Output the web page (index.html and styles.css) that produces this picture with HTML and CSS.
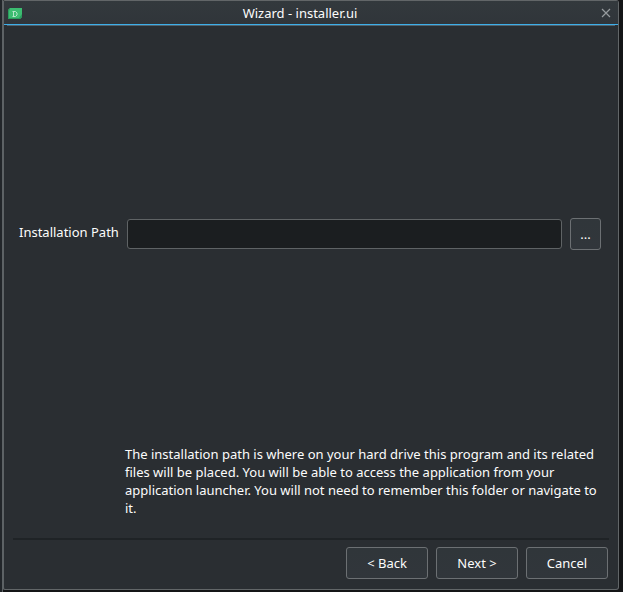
FILE: index.html
```html
<!DOCTYPE html>
<html lang="en">
<head>
<meta charset="utf-8">
<title>Wizard - installer.ui</title>
<link rel="stylesheet" href="styles.css">
</head>
<body>
<main class="window">
  <header class="titlebar">
    <svg class="app-icon" width="14" height="11" viewBox="0 0 14 11" aria-hidden="true">
      <path fill="#3cbc71" d="M2 0h12v9l-2 2H0V2z"/>
      <path fill="#2a9c5d" d="M0 2l2-2v1L1 3v7H0zM14 6v3l-2 2H0v-1h11z"/>
      <path fill="none" stroke="#b4e6c9" d="M4.500 8.500h3l1.500-1.500v-2l-1.500-1.500h-3M5.500 3.500v5"/>
    </svg>
    <h1 class="title">Wizard - installer.ui</h1>
    <svg class="close" width="10" height="10" viewBox="0 0 10 10" role="img" aria-label="Close">
      <path d="M1 1l8 8M9 1L1 9"/>
    </svg>
  </header>
  <div class="accent"></div>
  <section class="page">
    <div class="path-row">
      <label class="path-label" for="path">Installation Path</label>
      <input class="path-input" id="path" type="text">
      <button class="button browse">...</button>
    </div>
    <p class="description">The installation path is where on your hard drive this program and its related files will be placed. You will be able to access the application from your application launcher. You will not need to remember this folder or navigate to it.</p>
  </section>
  <footer class="actions">
    <button class="button">&lt; Back</button>
    <button class="button">Next &gt;</button>
    <button class="button">Cancel</button>
  </footer>
</main>
</body>
</html>
```
FILE: styles.css
```css
* {
  box-sizing: border-box;
}

body {
  margin: 0;
  height: 592px;
  padding: 0 4px 2px 2px;
  overflow: hidden;
  background: linear-gradient(90deg, #22262a 2px, #5d6265 2px 3px, #141517 3px);
  color: #fcfcfc;
  font: 13px/18px "Noto Sans", sans-serif;
}

.window {
  display: flex;
  flex-direction: column;
  height: 590px;
  border: 1px solid #626668;
  border-left: 2px solid #5d6265;
  border-radius: 3px;
  background: #2a2e32;
}

.titlebar {
  display: grid;
  grid-template-columns: 20px 1fr 46px;
  align-items: center;
  height: 23px;
  padding: 0 0 0 4px;
  background: linear-gradient(#33393d, #30353a);
}

.title {
  margin: 1px 0 0;
  text-align: center;
  font: inherit;
}

.app-icon {
  margin-top: 1px;
}

.close {
  margin: 1px 0 0 29px;
  fill: none;
  stroke: #969b9e;
  stroke-width: 1.2;
}

.accent {
  height: 2px;
  border-top: 1px solid #3daee9;
  background: linear-gradient(#50636f, #50636f) 3px 0 / 608px 1px no-repeat;
}

.page {
  display: flex;
  flex-direction: column;
  justify-content: space-between;
  height: 514px;
  margin: 0 9px;
  padding: 192px 8px 21px 6px;
  border-bottom: 2px solid #1f2326;
}

.path-row {
  display: flex;
  align-items: center;
}

.path-label {
  width: 108px;
  margin-top: -4px;
  white-space: nowrap;
}

.path-input {
  width: 435px;
  height: 30px;
  margin-right: 8px;
  padding: 0 6px;
  border: 1px solid #5f6365;
  border-radius: 3px;
  outline: 0;
  background: #1b1e20;
  color: inherit;
  font: inherit;
}

.description {
  width: 476px;
  margin: 0 0 0 106px;
}

.actions {
  display: flex;
  justify-content: flex-end;
  gap: 8px;
  padding: 7px 10px 0;
}

.button {
  width: 82px;
  height: 32px;
  padding: 0;
  border: 1px solid #6c7073;
  border-radius: 3px;
  background: linear-gradient(#30363a, #31363b);
  color: inherit;
  font: inherit;
}

.browse {
  width: 31px;
}
```
